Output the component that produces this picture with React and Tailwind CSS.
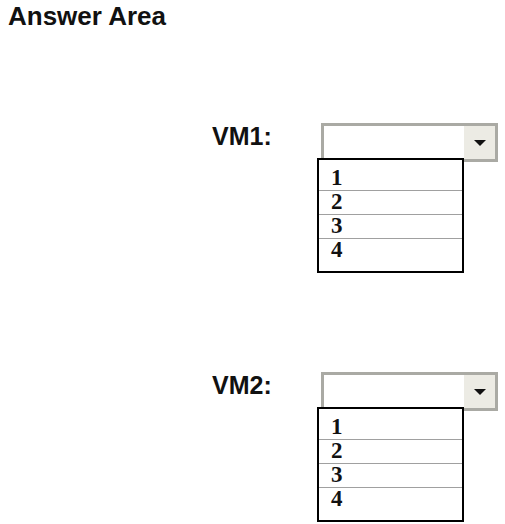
const OPTIONS = ['1', '2', '3', '4'];

function DropdownArrow() {
  return (
    <svg width="12" height="6" viewBox="0 0 12 6" className="block">
      <path d="M0 0 L12 0 L6 6 Z" fill="#111" />
    </svg>
  );
}

function OpenSelect() {
  return (
    <div className="flex flex-col">
      {/* closed select box */}
      <div className="flex h-[39px] w-[177px] border-[3px] border-[#aaaaa4] bg-white">
        <div className="flex-1" />
        <div className="flex w-[31px] items-center justify-center bg-[#ecebe4]">
          <DropdownArrow />
        </div>
      </div>
      {/* the open options list, drawn over the box's lower edge */}
      <div className="relative z-10 -ml-[4px] -mt-[4px] w-[147px] border-2 border-black bg-white pb-[8px] pt-[7px]">
        {OPTIONS.map((opt, i) => (
          <div
            key={opt}
            className={
              'h-[24px] pl-[12px] text-[23px] font-bold leading-[21px] text-[#111] ' +
              (i < OPTIONS.length - 1 ? 'border-b border-[#a0a0a0]' : '')
            }
            style={{ fontFamily: '"Liberation Serif", serif' }}
          >
            {opt}
          </div>
        ))}
      </div>
    </div>
  );
}

function VmRow({ label }) {
  return (
    <div className="flex items-start pl-[212px]">
      <div className="w-[109px] pt-[1px] text-[25px] font-bold leading-none text-[#111]">{label}</div>
      <OpenSelect />
    </div>
  );
}

export default function App() {
  return (
    <div
      className="h-[524px] w-[505px] overflow-hidden bg-white"
      style={{ fontFamily: '"Liberation Sans", Arial, sans-serif' }}
    >
      <h1 className="pl-[8px] pt-[3px] text-[26px] font-bold leading-none text-[#111]">Answer Area</h1>
      <div className="mt-[94px]">
        <VmRow label="VM1:" />
      </div>
      <div className="mt-[99px]">
        <VmRow label="VM2:" />
      </div>
    </div>
  );
}
